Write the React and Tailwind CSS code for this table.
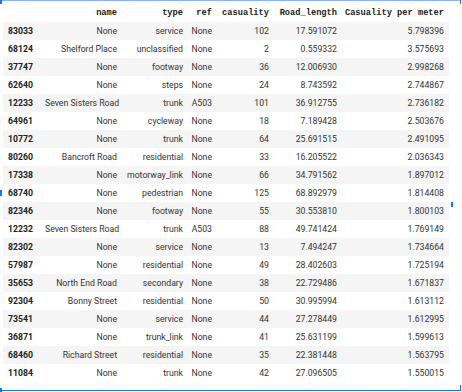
import React from "react";

const rows = [
  ["83033", "None", "service", "None", "102", "17.591072", "5.798396"],
  ["68124", "Shelford Place", "unclassified", "None", "2", "0.559332", "3.575693"],
  ["37747", "None", "footway", "None", "36", "12.006930", "2.998268"],
  ["62640", "None", "steps", "None", "24", "8.743592", "2.744867"],
  ["12233", "Seven Sisters Road", "trunk", "A503", "101", "36.912755", "2.736182"],
  ["64961", "None", "cycleway", "None", "18", "7.189428", "2.503676"],
  ["10772", "None", "trunk", "None", "64", "25.691515", "2.491095"],
  ["80260", "Bancroft Road", "residential", "None", "33", "16.205522", "2.036343"],
  ["17338", "None", "motorway_link", "None", "66", "34.791562", "1.897012"],
  ["68740", "None", "pedestrian", "None", "125", "68.892979", "1.814408"],
  ["82346", "None", "footway", "None", "55", "30.553810", "1.800103"],
  ["12232", "Seven Sisters Road", "trunk", "A503", "88", "49.741424", "1.769149"],
  ["82302", "None", "service", "None", "13", "7.494247", "1.734664"],
  ["57987", "None", "residential", "None", "49", "28.402603", "1.725194"],
  ["35653", "North End Road", "secondary", "None", "38", "22.729486", "1.671837"],
  ["92304", "Bonny Street", "residential", "None", "50", "30.995994", "1.613112"],
  ["73541", "None", "service", "None", "44", "27.278449", "1.612995"],
  ["36871", "None", "trunk_link", "None", "41", "25.631199", "1.599613"],
  ["68460", "Richard Street", "residential", "None", "35", "22.381448", "1.563795"],
  ["11084", "None", "trunk", "None", "42", "27.096505", "1.550015"],
];

const headers = ["name", "type", "ref", "casuality", "Road_length", "Casuality per meter"];
const widths = ["w-[42px]", "w-[77px]", "w-[66px]", "w-[29px]", "w-[57px]", "w-[68px]", "w-[107px]"];

export default function App() {
  return (
    <div className="relative w-[462px] h-[392px] bg-white overflow-hidden">
      {/* selection frame */}
      <div className="absolute left-[2px] right-[2px] top-0 h-px bg-[#8ab4f8]" />
      <div className="absolute left-0 top-0 w-[2px] h-[4px] bg-[#1a73e8]" />
      <div className="absolute right-[1px] top-0 w-px h-[4px] bg-[#1a73e8]" />
      <div className="absolute left-[2px] right-[2px] top-[390px] h-px bg-[#1a73e8]" />
      <div className="absolute left-0 top-[388px] w-[2px] h-[4px] bg-[#1a73e8]" />
      <div className="absolute right-[1px] top-[385px] w-px h-[6px] bg-[#1a73e8]" />
      <div className="absolute left-0 top-[190px] w-[2px] h-[6px] bg-[#1a73e8]" />
      <div className="absolute left-[451px] top-[202px] w-[2px] h-[5px] bg-[#1a73e8]" />

      <div className="pt-[3px] pl-[3px]">
        <table className="table-fixed border-collapse w-[446px] text-[8.7px] leading-[18px] text-[#333] font-['Roboto',sans-serif]">
          <colgroup>
            {widths.map((w, i) => (
              <col key={i} className={w} />
            ))}
          </colgroup>
          <thead>
            <tr className="h-[19px]">
              <th className="p-0" />
              {headers.map((h) => (
                <th
                  key={h}
                  className="p-0 text-right pr-[5px] font-bold text-[#222] font-['Liberation_Mono',monospace] whitespace-nowrap"
                >
                  {h}
                </th>
              ))}
            </tr>
          </thead>
          <tbody>
            {rows.map((r, i) => (
              <tr key={r[0]} className={`h-[18px] ${i % 2 === 0 ? "bg-[#f5f5f5]" : "bg-white"}`}>
                <th className="p-0 text-left pl-[5px] font-bold text-[#222]">{r[0]}</th>
                {r.slice(1).map((c, j) => (
                  <td key={j} className="p-0 text-right pr-[5px] whitespace-nowrap">
                    {c}
                  </td>
                ))}
              </tr>
            ))}
          </tbody>
        </table>
      </div>
    </div>
  );
}
